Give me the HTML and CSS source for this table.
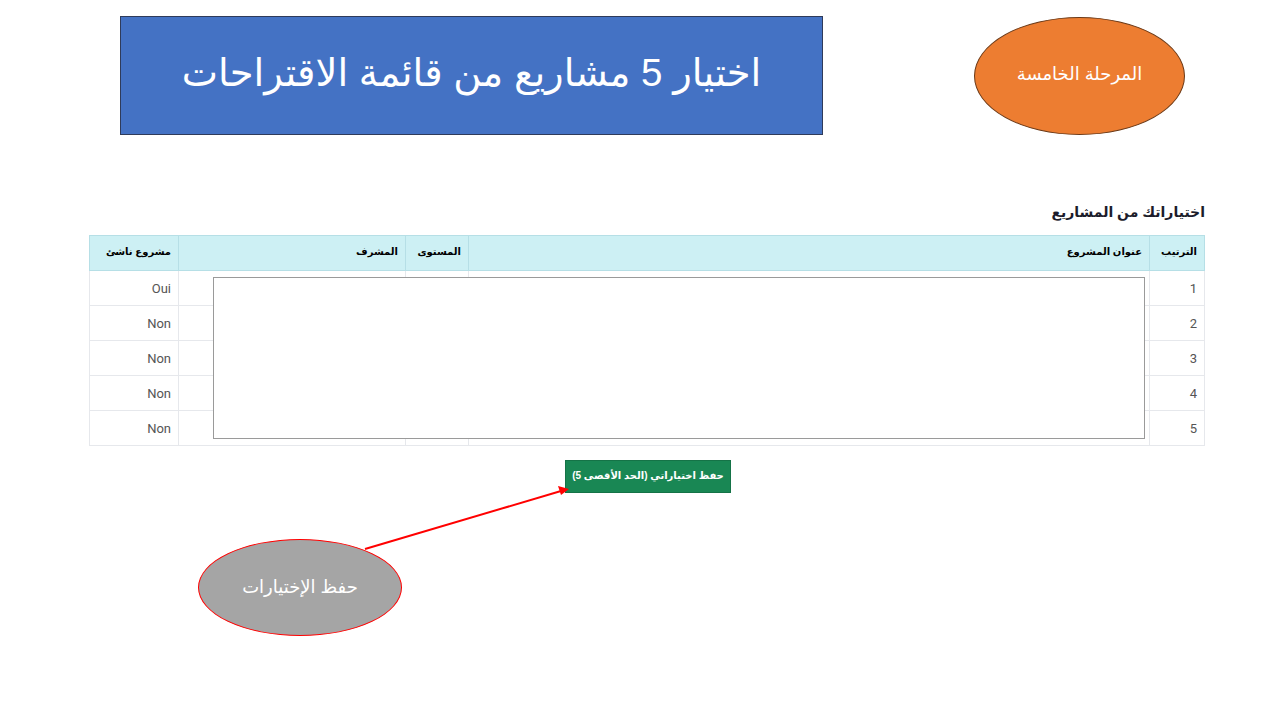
FILE: index.html
```html
<!DOCTYPE html>
<html lang="ar">
<head>
<meta charset="utf-8">
<link rel="stylesheet" href="styles.css">
</head>
<body>
<div class="slide">
  <header class="top">
    <div class="title-box">اختيار 5 مشاريع من قائمة الاقتراحات</div>
    <div class="stage">المرحلة الخامسة</div>
  </header>

  <section class="choices" dir="rtl">
    <h2 class="heading">اختياراتك من المشاريع</h2>
    <div class="table-wrap">
      <table class="tbl">
        <thead>
          <tr>
            <th class="c-rank">الترتيب</th>
            <th class="c-title">عنوان المشروع</th>
            <th class="c-level">المستوى</th>
            <th class="c-sup">المشرف</th>
            <th class="c-start">مشروع ناشئ</th>
          </tr>
        </thead>
        <tbody>
          <tr><td>1</td><td></td><td></td><td></td><td>Oui</td></tr>
          <tr><td>2</td><td></td><td></td><td></td><td>Non</td></tr>
          <tr><td>3</td><td></td><td></td><td></td><td>Non</td></tr>
          <tr><td>4</td><td></td><td></td><td></td><td>Non</td></tr>
          <tr><td>5</td><td></td><td></td><td></td><td>Non</td></tr>
        </tbody>
      </table>
      <div class="mask"></div>
    </div>
    <div class="actions">
      <button class="save-btn">حفظ اختياراتي (الحد الأقصى 5)</button>
    </div>
  </section>

  <div class="callout">حفظ الإختيارات</div>
  <svg class="arrow" width="1280" height="720" viewBox="0 0 1280 720">
    <line x1="365" y1="549" x2="561" y2="491" stroke="#ff0000" stroke-width="2"/>
    <polygon points="569,489 558,486 561,495" fill="#ff0000"/>
  </svg>
</div>
</body>
</html>
```
FILE: styles.css
```css
* { box-sizing: border-box; }
html, body { margin: 0; padding: 0; background: #ffffff; }
body { font-family: "Liberation Sans", "DejaVu Sans", sans-serif; }

.slide {
  position: relative;
  width: 1280px;
  height: 720px;
  overflow: hidden;
}

.top {
  display: flex;
  align-items: flex-start;
  padding: 16px 0 0 120px;
  height: 135px;
}

.title-box {
  width: 703px;
  height: 119px;
  background: #4472c4;
  border: 1px solid #2f3b5a;
  color: #ffffff;
  font-size: 38.5px;
  display: flex;
  align-items: center;
  justify-content: center;
  padding-bottom: 6px;
  direction: rtl;
}

.stage {
  margin-left: 151px;
  margin-top: 1px;
  width: 211px;
  height: 118px;
  border-radius: 50%;
  background: #ed7d31;
  border: 1px solid #6b3a18;
  color: #ffffff;
  font-size: 18px;
  display: flex;
  align-items: center;
  justify-content: center;
  padding-bottom: 4px;
  direction: rtl;
}

.choices {
  padding: 67px 75px 0 90px;
}

.heading {
  margin: 0 0 12px 0;
  font-size: 14px;
  font-weight: bold;
  color: #1c1c2b;
  height: 21px;
  line-height: 21px;
}

.table-wrap {
  position: relative;
  width: 1115px;
}

.tbl {
  width: 1115px;
  border-collapse: collapse;
  table-layout: fixed;
}

.tbl th {
  background: #cdf0f4;
  border: 1px solid #b6dfe6;
  height: 35px;
  font-size: 10px;
  font-weight: bold;
  color: #000000;
  text-align: right;
  padding: 0 7px 4px 7px;
}

.tbl td {
  border: 1px solid #e6e8ec;
  height: 35px;
  font-family: Roboto, "Liberation Sans", sans-serif;
  font-size: 13px;
  color: #555555;
  text-align: right;
  padding: 0 7px;
}

.c-rank { width: 55px; }
.c-title { width: 681px; }
.c-level { width: 63px; }
.c-sup { width: 227px; }
.c-start { width: 89px; }

.mask {
  position: absolute;
  top: 42px;
  left: 123px;
  width: 932px;
  height: 162px;
  background: #ffffff;
  border: 1px solid #9a9a9a;
}

.actions {
  display: flex;
  justify-content: flex-start;
  padding: 14px 474px 0 0;
}

.save-btn {
  width: 166px;
  height: 33px;
  background: #198754;
  border: 1px solid #157347;
  color: #ffffff;
  font-family: "Liberation Sans", "DejaVu Sans", sans-serif;
  font-size: 10px;
  font-weight: bold;
  white-space: nowrap;
  padding: 0 0 3px 0;
  direction: rtl;
}

.callout {
  position: absolute;
  left: 198px;
  top: 539px;
  width: 204px;
  height: 97px;
  border-radius: 50%;
  background: #a5a5a5;
  border: 1px solid #ff0000;
  color: #ffffff;
  font-size: 18px;
  display: flex;
  align-items: center;
  justify-content: center;
  padding-bottom: 2px;
  direction: rtl;
}

.arrow {
  position: absolute;
  left: 0;
  top: 0;
  pointer-events: none;
}
```
